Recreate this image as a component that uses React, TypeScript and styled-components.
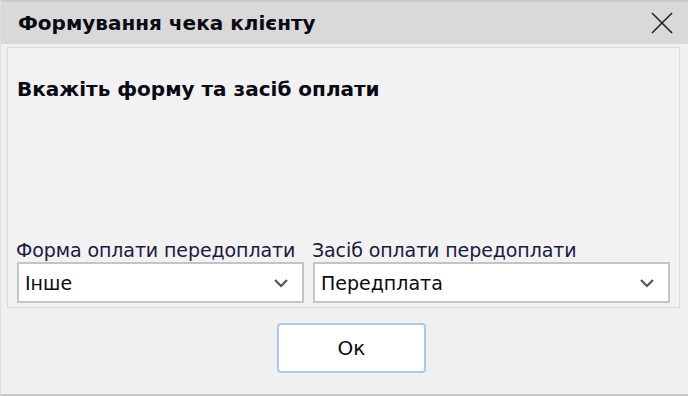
import React from 'react';
import styled, { createGlobalStyle } from 'styled-components';

const GlobalStyle = createGlobalStyle`
  html, body {
    margin: 0;
    padding: 0;
    background: #f0f0f0;
  }
  body {
    font-family: "DejaVu Sans", "Noto Sans", sans-serif;
    color: #000;
  }
`;

const ChevronDown: React.FC = () => (
  <svg width="16" height="10" viewBox="0 0 16 10">
    <path d="M2 2 L8 8 L14 2" fill="none" stroke="#555" strokeWidth="2.2" />
  </svg>
);

const Select: React.FC<{ label: string; value: string }> = (props) => (
  <StyledField>
    <StyledLabel>{props.label}</StyledLabel>
    <StyledSelect>
      <span>{props.value}</span>
      <ChevronDown />
    </StyledSelect>
  </StyledField>
);

const App: React.FC = () => {
  return (
    <>
      <GlobalStyle />
      <StyledWindow>
        <StyledTitleBar>
          <StyledTitle>Формування чека клієнту</StyledTitle>
          <StyledClose aria-label="close">
            <svg width="22" height="22" viewBox="0 0 22 22">
              <path d="M1 1 L21 21 M21 1 L1 21" stroke="#222" strokeWidth="1.6" />
            </svg>
          </StyledClose>
        </StyledTitleBar>
        <StyledBody>
          <StyledPanel>
            <StyledHeading>Вкажіть форму та засіб оплати</StyledHeading>
            <StyledFields>
              <Select label="Форма оплати передоплати" value="Інше" />
              <Select label="Засіб оплати передоплати" value="Передплата" />
            </StyledFields>
          </StyledPanel>
          <StyledFooter>
            <StyledButton>Ок</StyledButton>
          </StyledFooter>
        </StyledBody>
      </StyledWindow>
    </>
  );
};

export default App;

const StyledWindow = styled.div`
  width: 688px;
  height: 396px;
  box-sizing: border-box;
  display: flex;
  flex-direction: column;
  border-left: 1px solid #e0e0e0;
  border-bottom: 2px solid #c8c8c8;
  background: #f0f0f0;
`;

const StyledTitleBar = styled.div`
  height: 44px;
  box-sizing: border-box;
  display: flex;
  align-items: center;
  justify-content: space-between;
  padding: 0 15px 0 17px;
  background: #d9d9d9;
  border-top: 2px solid #cacaca;
`;

const StyledTitle = styled.div`
  font-size: 20px;
  font-weight: bold;
  color: #0a0a14;
`;

const StyledClose = styled.div`
  display: flex;
  align-items: center;
`;

const StyledBody = styled.div`
  flex: 1;
  display: flex;
  flex-direction: column;
  padding: 3px 8px 0 6px;
`;

const StyledPanel = styled.div`
  height: 261px;
  box-sizing: border-box;
  display: flex;
  flex-direction: column;
  justify-content: space-between;
  padding: 29px 9px 4px 9px;
  border: 1px solid #dadada;
  background: #f2f2f2;
`;

const StyledHeading = styled.div`
  font-size: 20px;
  font-weight: bold;
  color: #0a0a14;
`;

const StyledFields = styled.div`
  display: grid;
  grid-template-columns: 287px 1fr;
  column-gap: 9px;
`;

const StyledField = styled.div`
  display: flex;
  flex-direction: column;
`;

const StyledLabel = styled.div`
  font-size: 19px;
  color: #1a1a40;
  line-height: 23px;
  letter-spacing: -0.1px;
  margin-left: -1px;
  white-space: nowrap;
`;

const StyledSelect = styled.div`
  height: 41px;
  box-sizing: border-box;
  display: flex;
  align-items: center;
  justify-content: space-between;
  padding: 0 13px 0 6px;
  background: #fff;
  border: 2px solid #c4c4c4;
  font-size: 19px;
  color: #0a0a14;
`;

const StyledFooter = styled.div`
  flex: 1;
  display: flex;
  justify-content: center;
  align-items: flex-start;
  padding-top: 15px;
  padding-left: 16px;
`;

const StyledButton = styled.button`
  width: 149px;
  height: 50px;
  background: #fff;
  border: 2px solid #a8c8f0;
  border-radius: 4px;
  font-family: "DejaVu Sans", sans-serif;
  font-size: 20px;
  color: #0a0a14;
`;
